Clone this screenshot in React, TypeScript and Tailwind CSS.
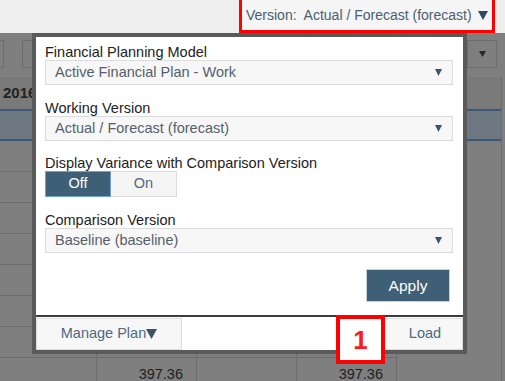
import React from "react"

const Arrow = ({ w, h, color }: { w: number; h: number; color: string }) => (
    <svg width={w} height={h} viewBox={`0 0 ${w} ${h}`} className="shrink-0">
        <polygon points={`0,0 ${w},0 ${w / 2},${h}`} fill={color} />
    </svg>
)

function Select({ value }: { value: string }) {
    return (
        <div className="h-[25px] w-[408px] bg-[#f7f7f7] border border-[#dcdcdc] flex items-center justify-between pl-[9px] pr-[10px]">
            <span className="text-[14.5px] leading-[17px] text-[#55606b]">{value}</span>
            <Arrow w={7} h={7} color="#3b5467" />
        </div>
    )
}

function Label({ children }: { children: React.ReactNode }) {
    return <div className="h-[16px] text-[14.5px] leading-[16px] text-[#222]">{children}</div>
}

const rows = [0, 1, 2, 3, 4, 5, 6]

export default function App() {
    return (
        <div className="relative w-[505px] h-[381px] overflow-hidden bg-[#7f7f7f] font-['Liberation_Sans',Arial,sans-serif]">
            {/* top bar */}
            <div className="h-[33px] bg-[#eeeeee] flex justify-end pr-[10px]">
                <div className="w-[256px] h-[33px] border-x-[3px] border-b-[3px] border-[#ff0000] bg-[#f5f5f5] flex items-center pl-[4px] gap-[6px]">
                    <span className="text-[14px] leading-[17px] text-[#4a6072] whitespace-nowrap">Version:&nbsp; Actual / Forecast (forecast)</span>
                    <Arrow w={10} h={9} color="#2e4a5f" />
                </div>
            </div>

            {/* toolbar (dimmed) */}
            <div className="h-[44px] flex items-start pt-[7px]">
                <div className="w-[4px] h-[28px] border-r border-y border-[#6c6c6c]" />
                <div className="ml-[18px] w-[60px] h-[28px] border border-[#6c6c6c]" />
                <div className="ml-auto mr-[8px] w-[30px] h-[28px] border border-[#6c6c6c] flex items-center justify-center">
                    <Arrow w={7} h={6} color="#1c2a36" />
                </div>
            </div>

            {/* table (dimmed) */}
            <div className="flex">
                <div className="w-[502px] border-r border-[#6c6c6c]">
                    <div className="h-[32px] bg-[#7a7a7a] flex items-center pl-[3px]">
                        <span className="text-[15px] font-bold text-[#222]">2016</span>
                    </div>
                    <div className="h-[32px] bg-[#6e7882] border-y-2 border-[#3b5872]" />
                    <div className="w-[397px]">
                        {rows.map((r) => (
                            <div key={r} className="h-[31px] flex border-b border-[#6c6c6c]">
                                <div className="w-[97px] border-r border-[#6c6c6c]" />
                                <div className="w-[100px] border-r border-[#6c6c6c]" />
                                <div className="w-[100px] border-r border-[#6c6c6c]" />
                                <div className="w-[100px] border-r border-[#6c6c6c]" />
                            </div>
                        ))}
                        <div className="h-[31px] flex text-[14.5px] leading-[17px] text-[#1e1e1e]">
                            <div className="w-[97px] border-r border-[#6c6c6c]" />
                            <div className="w-[100px] border-r border-[#6c6c6c] text-right pr-[13px] pt-[8px]">397.36</div>
                            <div className="w-[100px] border-r border-[#6c6c6c]" />
                            <div className="w-[100px] border-r border-[#6c6c6c] text-right pr-[13px] pt-[8px]">397.36</div>
                        </div>
                    </div>
                </div>
            </div>

            {/* version dialog */}
            <div className="absolute left-[32px] top-[33px] w-[435px] h-[321px] border-4 border-[#5a5a5a] bg-white flex flex-col">
                <div className="pl-[9px] pt-[7px] flex flex-col">
                    <Label>Financial Planning Model</Label>
                    <Select value="Active Financial Plan - Work" />

                    <div className="mt-[15px]">
                        <Label>Working Version</Label>
                    </div>
                    <Select value="Actual / Forecast (forecast)" />

                    <div className="mt-[14px]">
                        <Label>Display Variance with Comparison Version</Label>
                    </div>
                    <div className="flex h-[26px]">
                        <div className="w-[66px] bg-[#3e6077] border border-[#6e9fd6] flex items-center justify-center text-[14.5px] text-white">Off</div>
                        <div className="w-[66px] bg-[#f5f5f5] border border-l-0 border-[#dcdcdc] flex items-center justify-center text-[14.5px] text-[#4d6a80]">On</div>
                    </div>

                    <div className="mt-[15px]">
                        <Label>Comparison Version</Label>
                    </div>
                    <Select value="Baseline (baseline)" />

                    <div className="flex justify-end pr-[13px] mt-[16px]">
                        <div className="w-[84px] h-[33px] bg-[#3e5f75] border border-[#c9d2d8] flex items-center justify-center text-[15.5px] text-white">Apply</div>
                    </div>
                </div>

                <div className="mt-auto border-t-2 border-[#3c3c3c] pt-[1px] flex justify-between">
                    <div className="w-[146px] h-[32px] bg-[#f7f7f7] border border-[#dcdcdc] flex items-center justify-center text-[14.5px] text-[#4d6a80]">
                        <span>Manage Plan</span>
                        <Arrow w={11} h={10} color="#3b5467" />
                    </div>
                    <div className="w-[80px] h-[32px] bg-[#f7f7f7] border border-[#dcdcdc] flex items-center justify-center text-[14.5px] text-[#4d6a80] pl-[4px]">Load</div>
                </div>
            </div>

            {/* annotation */}
            <div className="absolute left-[336px] top-[315px] w-[49px] h-[49px] border-4 border-[#ff0000] bg-white flex items-center justify-center">
                <span className="text-[26px] font-bold leading-none text-[#ff1a1a]">1</span>
            </div>
        </div>
    )
}
